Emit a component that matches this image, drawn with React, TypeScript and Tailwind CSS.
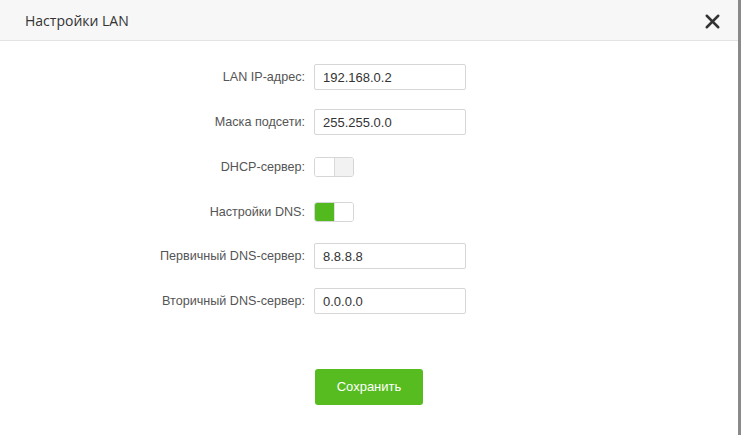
import { X } from "lucide-react";

const labelClass =
  "w-[314px] pr-[9px] text-right text-[12.6px] text-[#555]";

function TextRow({
  label,
  value,
  className,
}: {
  label: string;
  value: string;
  className?: string;
}) {
  return (
    <div className={"flex items-center h-[26px] " + (className ?? "")}>
      <label className={labelClass}>{label}</label>
      <input
        type="text"
        defaultValue={value}
        className="w-[152px] h-[26px] px-[8px] border border-[#d6d6d6] rounded-[2px] text-[13px] text-[#333] outline-none"
      />
    </div>
  );
}

function SwitchRow({
  label,
  on,
  className,
}: {
  label: string;
  on: boolean;
  className?: string;
}) {
  return (
    <div className={"flex items-center h-[20px] " + (className ?? "")}>
      <label className={labelClass}>{label}</label>
      <div className="flex w-[40px] h-[20px] border border-[#d6d6d6] rounded-[3px] overflow-hidden">
        {on ? (
          <>
            <span className="flex-1 bg-[#52b91f]"></span>
            <span className="flex-1 bg-white border-l border-[#e2e2e2]"></span>
          </>
        ) : (
          <>
            <span className="flex-1 bg-white border-r border-[#dadada]"></span>
            <span className="flex-1 bg-[#f2f2f2]"></span>
          </>
        )}
      </div>
    </div>
  );
}

export default function App() {
  return (
    <div
      className="flex w-[741px] h-[435px] bg-white"
      style={{ fontFamily: '"Liberation Sans", Arial, sans-serif' }}
    >
      <div className="flex flex-col flex-1">
        <div className="flex items-center justify-between h-[41px] pl-[25px] pr-[14px] bg-[#f7f7f7] border-b border-[#e3e3e3]">
          <h3
            className="text-[14px] text-[#333]"
            style={{ fontFamily: '"Open Sans", sans-serif' }}
          >
            Настройки LAN
          </h3>
          <X className="size-[23px] text-[#333] mt-[3px]" strokeWidth={2.6} />
        </div>
        <form className="flex flex-col pt-[23px]">
          <TextRow label="LAN IP-адрес:" value="192.168.0.2" />
          <TextRow label="Маска подсети:" value="255.255.0.0" className="mt-[19px]" />
          <SwitchRow label="DHCP-сервер:" on={false} className="mt-[22px]" />
          <SwitchRow label="Настройки DNS:" on={true} className="mt-[25px]" />
          <TextRow label="Первичный DNS-сервер:" value="8.8.8.8" className="mt-[21px]" />
          <TextRow label="Вторичный DNS-сервер:" value="0.0.0.0" className="mt-[19px]" />
          <div className="flex pl-[315px] mt-[55px]">
            <button
              type="button"
              className="w-[108px] h-[36px] rounded-[3px] bg-[#56bc1f] text-white text-[13px]"
            >
              Сохранить
            </button>
          </div>
        </form>
      </div>
      <div className="w-[3px] bg-[#8a8a8a]"></div>
    </div>
  );
}
